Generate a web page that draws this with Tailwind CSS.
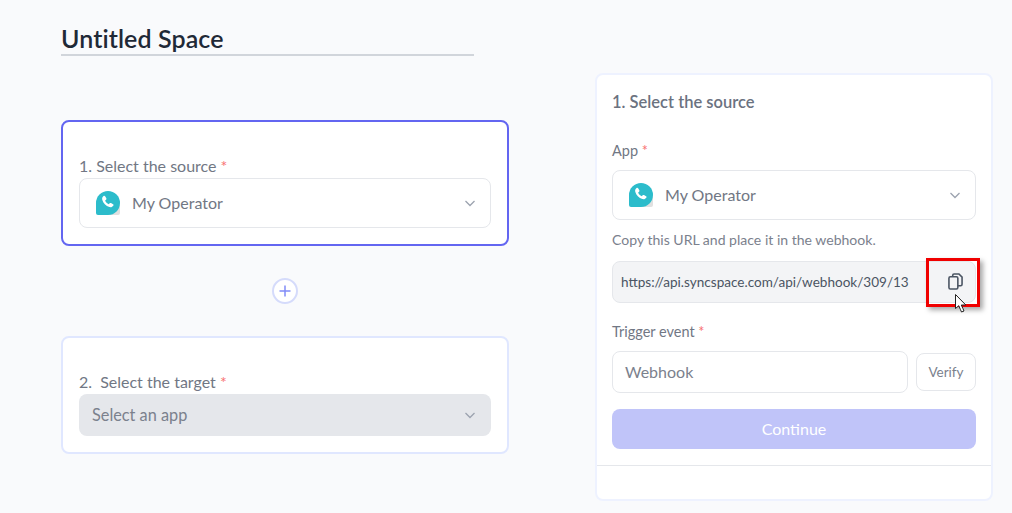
<!DOCTYPE html>
<html>
<head>
<meta charset="utf-8">
<script src="https://cdn.jsdelivr.net/npm/@tailwindcss/browser@4"></script>
</head>
<body class="bg-[#f9fafc] font-['Lato','Inter',sans-serif]">
<div class="w-[1012px] h-[513px] overflow-hidden flex items-start pl-[61px] relative">
  <div class="w-[448px] flex flex-col shrink-0">
    <div class="mt-[23px] w-[413px] h-[33px] border-b-2 border-[#d1d5db] text-[25px] leading-[30px] font-semibold text-[#1f2937] tracking-[0.1px]">Untitled Space</div>
    <div class="mt-[64px] h-[126px] bg-white border-2 border-[#6366f1] rounded-[8px] px-[16px] pt-[34px]">
      <div class="text-[16px] leading-[20px] text-[#717784]"><span>1.</span> Select the source <span class="text-[#f87171]">*</span></div>
      <div class="mt-[2px] h-[50px] border border-[#e5e7eb] rounded-[8px] flex items-center pl-[16px] pr-[14px]">
        <svg width="24" height="24" viewBox="0 0 24 24" class="shrink-0"><path d="M5 24h17a2 2 0 0 0 2-2v-8z" fill="#e0e0e0"/><path d="M12 0a12 12 0 0 1 0 24H2a2 2 0 0 1-2-2V12A12 12 0 0 1 12 0z" fill="#2cbccb"/><path transform="translate(-2.400 -2.400) scale(1.200)" d="M8.300 6.200c.5-.4 1-.3 1.300.2l1 1.700c.2.400.2.800-.2 1.100l-.8.700c.5 1.400 1.600 2.500 3 3.100l.8-.8c.3-.3.700-.4 1.100-.2l1.700 1c.5.300.6.800.2 1.300-.8 1-1.900 1.500-3.200 1.100-3-1-5.200-3.200-6-6.100-.3-1.300.2-2.400 1.100-3.100z" fill="#fff"/></svg>
        <span class="ml-[12px] text-[16px] text-[#717784]">My Operator</span>
        <svg class="ml-auto" width="12" height="12" viewBox="0 0 12 12" fill="none" stroke="#9ca3af" stroke-width="1.300"><path d="M1.500 4l4.500 4.500L10.500 4"/></svg>
      </div>
    </div>
    <div class="h-[90px] flex items-center justify-center">
      <div class="w-[26px] h-[26px] rounded-full bg-white border-2 border-[#d5dbfb] flex items-center justify-center">
        <svg width="12" height="12" viewBox="0 0 12 12" stroke="#818cf8" stroke-width="1.500" fill="none"><path d="M6 .5v11M.5 6h11"/></svg>
      </div>
    </div>
    <div class="h-[118px] bg-white border-2 border-[#e0e7ff] rounded-[8px] px-[16px] pt-[34px]">
      <div class="text-[16px] leading-[20px] text-[#717784]"><span class="mr-[4px]">2.</span> Select the target <span class="text-[#f87171]">*</span></div>
      <div class="h-[42px] mt-[2px] bg-[#e5e7eb] rounded-[8px] flex items-center pl-[13px] pr-[15px]">
        <span class="text-[16.300px] pt-[1px] text-[#7b818d]">Select an app</span>
        <svg class="ml-auto" width="12" height="12" viewBox="0 0 12 12" fill="none" stroke="#9ca3af" stroke-width="1.300"><path d="M1.500 4l4.500 4.500L10.500 4"/></svg>
      </div>
    </div>
  </div>
  <div class="ml-[86px] mt-[73px] w-[398px] h-[428px] bg-white border-2 border-[#eef2ff] rounded-[8px] flex flex-col">
    <div class="px-[15px] flex-1 flex flex-col">
      <div class="mt-[16px] text-[16.500px] leading-[22px] font-semibold text-[#6b7280]">1. Select the source</div>
      <div class="mt-[28px] text-[14.500px] leading-[20px] text-[#717784]">App <span class="text-[#f87171]">*</span></div>
      <div class="mt-[9px] h-[50px] border border-[#e5e7eb] rounded-[8px] flex items-center pl-[16px] pr-[14px]">
        <svg width="24" height="24" viewBox="0 0 24 24" class="shrink-0"><path d="M5 24h17a2 2 0 0 0 2-2v-8z" fill="#e0e0e0"/><path d="M12 0a12 12 0 0 1 0 24H2a2 2 0 0 1-2-2V12A12 12 0 0 1 12 0z" fill="#2cbccb"/><path transform="translate(-2.400 -2.400) scale(1.200)" d="M8.300 6.200c.5-.4 1-.3 1.300.2l1 1.700c.2.400.2.800-.2 1.100l-.8.700c.5 1.400 1.600 2.500 3 3.100l.8-.8c.3-.3.700-.4 1.100-.2l1.700 1c.5.300.6.800.2 1.300-.8 1-1.900 1.500-3.200 1.100-3-1-5.200-3.200-6-6.100-.3-1.300.2-2.400 1.100-3.100z" fill="#fff"/></svg>
        <span class="ml-[12px] text-[16px] text-[#717784]">My Operator</span>
        <svg class="ml-auto" width="12" height="12" viewBox="0 0 12 12" fill="none" stroke="#9ca3af" stroke-width="1.300"><path d="M1.500 4l4.500 4.500L10.500 4"/></svg>
      </div>
      <div class="mt-[10px] text-[14.050px] leading-[20px] text-[#7b818d]">Copy this URL and place it in the webhook.</div>
      <div class="mt-[11px] h-[42px] bg-[#f3f4f6] border border-[#e5e7eb] rounded-[8px] flex items-center pl-[8px] relative">
        <span class="text-[13.550px] text-[#4b5563]">https://api.syncspace.com/api/webhook/309/13</span>
        <div class="absolute right-[-5px] top-[-4px] w-[54px] h-[49px] border-[3px] border-[#f00000] shadow-[3px_3px_5px_rgba(0,0,0,0.35)] flex items-center justify-center pl-[4px] pb-[2px]">
          <svg width="15" height="17" viewBox="0 0 16 18" fill="none" stroke="#4b5563" stroke-width="1.700"><rect x="1" y="4" width="9.500" height="13" rx="1.500"/><path d="M5 4V2.500A1.500 1.500 0 0 1 6.500 1h5.200L15 4.300V12a1.500 1.500 0 0 1-1.500 1.500h-3"/></svg>
        </div>
      </div>
      <div class="mt-[19px] text-[14.500px] leading-[20px] text-[#717784]">Trigger event <span class="text-[#f87171]">*</span></div>
      <div class="mt-[9px] flex items-center gap-[8px]">
        <div class="w-[296px] h-[42px] border border-[#e5e7eb] rounded-[8px] flex items-center pl-[12px] text-[16px] text-[#7b818d]">Webhook</div>
        <div class="w-[60px] h-[38px] border border-[#e5e7eb] rounded-[8px] flex items-center justify-center text-[13.500px] text-[#7b818d]">Verify</div>
      </div>
      <div class="mt-[16px] h-[40px] bg-[#c0c4f9] rounded-[8px] flex items-center justify-center text-[16px] text-white">Continue</div>
    </div>
    <div class="h-[34px] border-t border-[#e5e7eb] shrink-0"></div>
  </div>
  <svg class="absolute left-[955px] top-[294px]" width="13" height="19" viewBox="0 0 13 19"><path d="M.5.500v14l3.300-2.800 1.700 4 1 2.300 2.500-1-1-2.300-1.700-3.700h4.500z" fill="#fff" stroke="#222" stroke-width="1"/></svg>
</div>
</body>
</html>
